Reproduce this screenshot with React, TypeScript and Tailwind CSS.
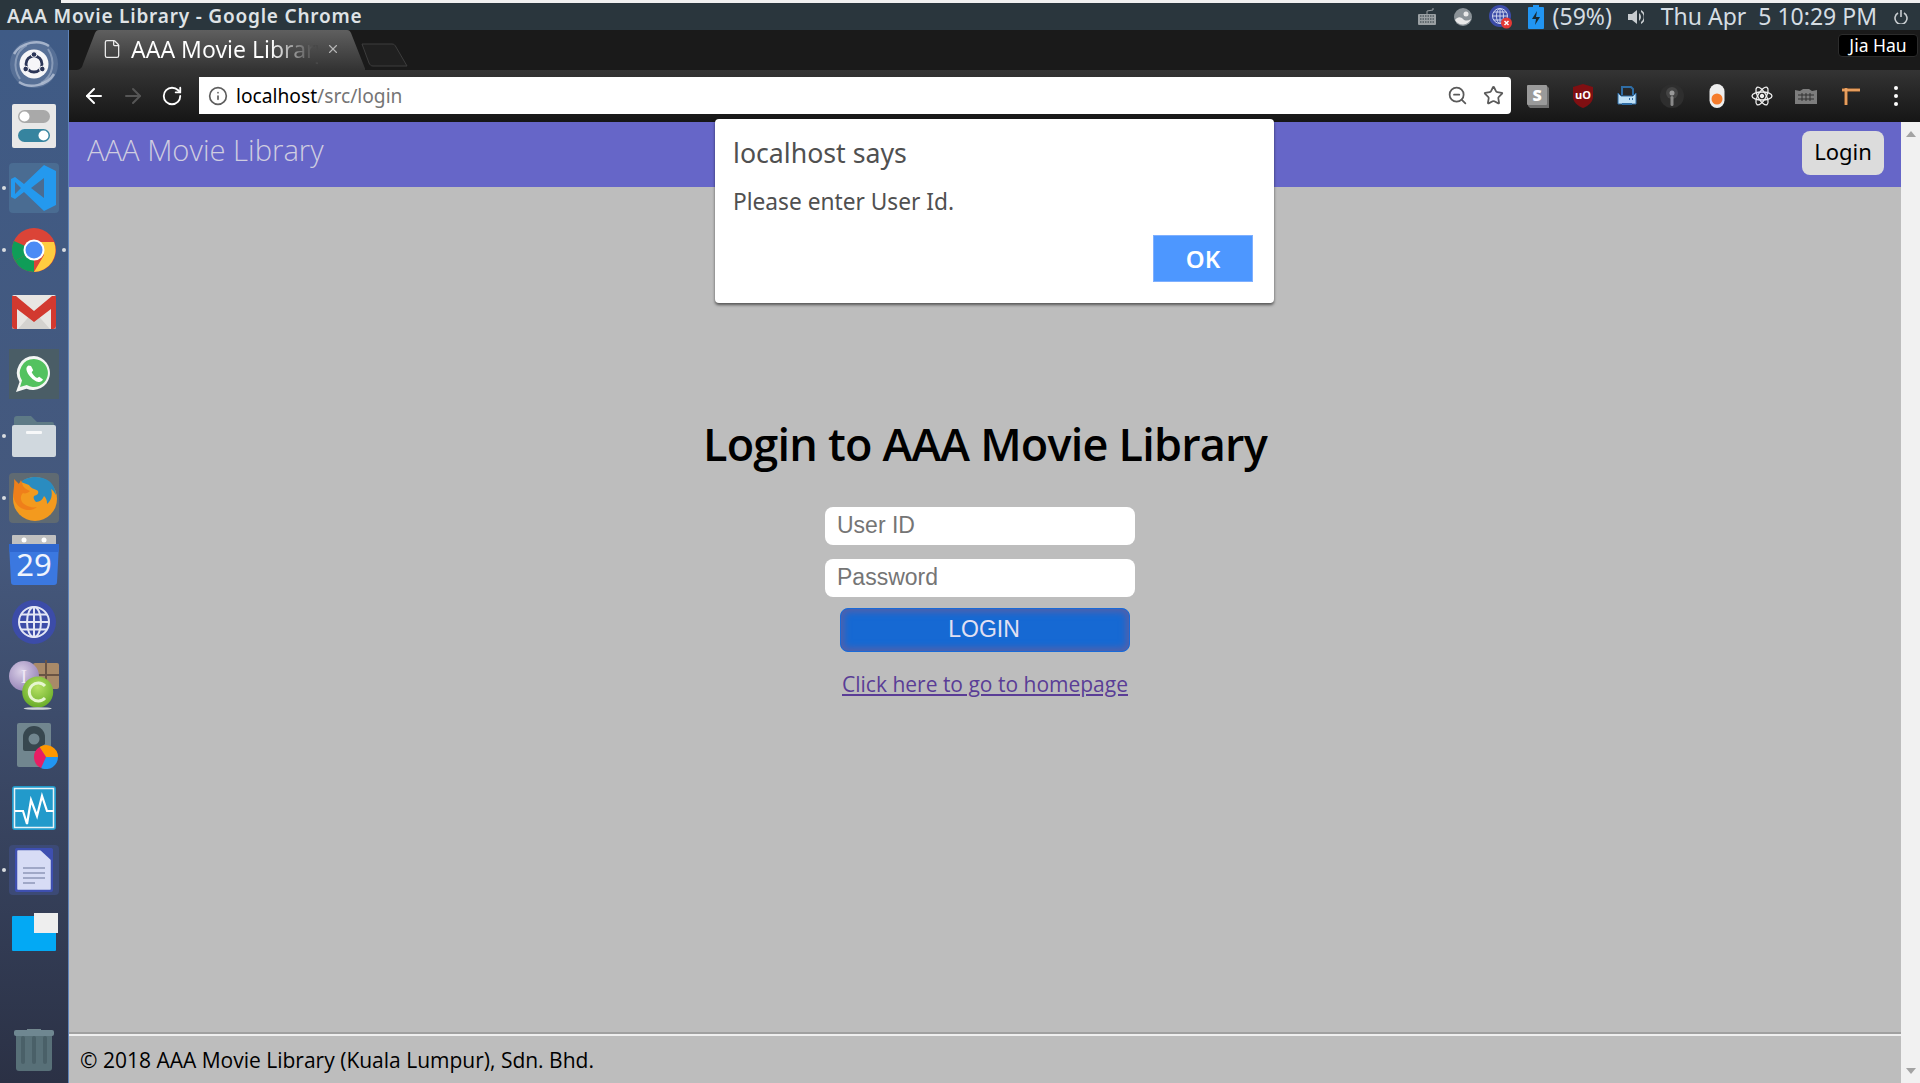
import { ArrowLeft, ArrowRight, RotateCw, Star, ZoomOut, Info, File, X } from "lucide-react";

const sans = "font-['Open_Sans',sans-serif]";
const ui = "font-['Noto_Sans',sans-serif]";

function UbuntuIcon() {
  return (
    <svg width="50" height="50" viewBox="0 0 50 50" fill="none">
      <circle cx="25" cy="25" r="24" fill="#8fa3c0" opacity="0.3" />
      <path d="M5 15C12 3 30 0 40 7M45 35C38 47 20 50 10 43" stroke="#c4cfdf" strokeWidth="2.500" opacity="0.7" />
      <path d="M11 40C3 28 6 12 18 6M39 10c8 12 5 28-7 34" stroke="#c4cfdf" strokeWidth="2" opacity="0.45" />
      <circle cx="25" cy="25" r="14.500" fill="#f6f6f8" />
      <circle cx="25" cy="25" r="8" stroke="#2c3658" strokeWidth="2.800" />
      <circle cx="25" cy="15.500" r="2.800" fill="#2c3658" stroke="#f6f6f8" />
      <circle cx="16.700" cy="30" r="2.800" fill="#2c3658" stroke="#f6f6f8" />
      <circle cx="33.300" cy="30" r="2.800" fill="#2c3658" stroke="#f6f6f8" />
    </svg>
  );
}

function SettingsIcon() {
  return (
    <svg width="44" height="44" viewBox="0 0 44 44">
      <rect width="44" height="44" rx="2" fill="#e8e8e8" />
      <rect x="6" y="6" width="32" height="13" rx="6.500" fill="#a9a9a9" />
      <circle cx="12.500" cy="12.500" r="5" fill="#fff" />
      <rect x="6" y="25" width="32" height="13" rx="6.500" fill="#36849f" />
      <circle cx="31.500" cy="31.500" r="5" fill="#fff" />
    </svg>
  );
}

function VsCodeIcon() {
  return (
    <div className="flex size-[50px] items-center justify-center rounded bg-[#4a6c92]">
      <svg width="48" height="48" viewBox="0 0 48 48">
        <path d="M34 1l12 6v34l-12 6-20-19-9 7-4-2V15l4-2 9 7z" fill="#2499ee" />
        <path d="M34 14L21 24l13 10zM5 18v12l6-6z" fill="#4a6c92" />
      </svg>
    </div>
  );
}

function ChromeIcon() {
  return (
    <svg width="44" height="44" viewBox="0 0 44 44">
      <circle cx="22" cy="22" r="22" fill="#db4437" />
      <path d="M22 22L3 33A22 22 0 0 1 2 13z" fill="#0f9d58" />
      <path d="M22 22L3 33A22 22 0 0 0 22 44z" fill="#0f9d58" />
      <path d="M22 14h20a22 22 0 0 1-20 30l10-17z" fill="#ffcd40" />
      <circle cx="22" cy="22" r="10.500" fill="#fff" />
      <circle cx="22" cy="22" r="8.500" fill="#4c8bf5" />
    </svg>
  );
}

function GmailIcon() {
  return (
    <svg width="44" height="34" viewBox="0 0 44 34">
      <rect width="44" height="34" rx="2" fill="#e8e6e3" />
      <path d="M6 34l16-18 16 18z" fill="#d4d2cf" />
      <path d="M0 3l22 17L44 3v28a3 3 0 0 1-3 3h-2V14L22 27 5 14v20H3a3 3 0 0 1-3-3z" fill="#d2392f" />
      <path d="M0 1h4l18 15L40 1h4v3L22 21 0 4z" fill="#d2392f" />
    </svg>
  );
}

function WhatsappIcon() {
  return (
    <div className="flex size-[50px] items-center justify-center bg-[#4a5d66]">
      <svg width="38" height="38" viewBox="0 0 38 38">
        <path d="M19 1a17 17 0 0 0-14.500 26L1 37l10.500-3.300A17 17 0 1 0 19 1z" fill="#f4f6f4" />
        <path d="M19 4a14 14 0 0 0-12 21.500L5 32l6.700-2A14 14 0 1 0 19 4z" fill="#53c25f" />
        <path d="M13.500 10.500c-1.500.8-2.500 2.500-2 4.500 1 4.500 6.500 11 12 12 2 .3 3.700-.8 4.500-2.500l-3.800-2.800-2 1.300c-2-.8-4.500-3.500-5.500-5.800l1.500-2-2.200-4.200z" fill="#fff" />
      </svg>
    </div>
  );
}

function FilesIcon() {
  return (
    <svg width="44" height="42" viewBox="0 0 44 42">
      <path d="M2 10V4a3 3 0 0 1 3-3h14l6 6h15a2 2 0 0 1 2 2v8H2z" fill="#5e7a86" />
      <rect y="10" width="44" height="32" rx="2" fill="#d0d8de" />
      <rect x="14" y="16" width="16" height="3" rx="1" fill="#f7f8f9" />
    </svg>
  );
}

function FirefoxIcon() {
  return (
    <div className="flex size-[50px] items-center justify-center rounded-sm bg-[#5f6a72]">
      <svg width="46" height="46" viewBox="0 0 46 46">
        <circle cx="24" cy="24" r="22" fill="#f39a1e" />
        <path d="M10 7C16 1 30 0 38 6c4 3 7 9 7 14-2-3-3-5-5-6 2 6 0 12-4 15 0-4-1-6-3-8-1 3-4 6-8 6-2-2-3-4-2-6 3-1 5-2 4-5-2-2-7-2-9-6z" fill="#2a8cc0" />
        <path d="M3 4l5 5 2-4 2 6c2 3 5 4 7 5-2 2-5 3-7 2-3 3-3 8 1 11 4 3 9 4 13 3-7 6-19 3-23-8C1 18 4 12 3 4z" fill="#ef7f1a" />
      </svg>
    </div>
  );
}

function CalendarIcon() {
  return (
    <svg width="50" height="50" viewBox="0 0 50 50">
      <rect x="3" y="0" width="44" height="12" rx="1" fill="#c0c0c0" />
      <circle cx="15" cy="5" r="2.500" fill="#fff" />
      <circle cx="35" cy="5" r="2.500" fill="#fff" />
      <path d="M0 9h50l-2 38a3 3 0 0 1-3 3H5a3 3 0 0 1-3-3z" fill="#3b78e0" />
      <path d="M0 9h50l-.5 8H.5z" fill="#2f67cf" />
      <text x="25" y="41" textAnchor="middle" fontSize="31" fill="#f0f4fd" fontFamily="Noto Sans">29</text>
    </svg>
  );
}

function GlobeIcon() {
  return (
    <svg width="44" height="44" viewBox="0 0 44 44" fill="none" stroke="#e3e6f5" strokeWidth="2">
      <circle cx="22" cy="22" r="22" fill="#3c4ca8" stroke="none" />
      <circle cx="22" cy="22" r="15" />
      <ellipse cx="22" cy="22" rx="7" ry="15" />
      <path d="M22 7v30M7 22h30M9 14.500h26M9 29.500h26" />
    </svg>
  );
}

function BundleIcon() {
  return (
    <svg width="50" height="52" viewBox="0 0 50 52">
      <defs>
        <radialGradient id="purpleBall" cx="0.4" cy="0.35" r="0.7">
          <stop offset="0" stopColor="#d9cfe6" />
          <stop offset="1" stopColor="#9481b6" />
        </radialGradient>
        <radialGradient id="greenBall" cx="0.5" cy="0.35" r="0.7">
          <stop offset="0" stopColor="#b7e264" />
          <stop offset="1" stopColor="#62a824" />
        </radialGradient>
      </defs>
      <rect x="24" y="5" width="26" height="26" rx="2" fill="#a98a68" />
      <path d="M37 2v29M24 17h26" stroke="#6a5444" strokeWidth="2" />
      <circle cx="15" cy="18" r="15" fill="url(#purpleBall)" />
      <text x="15" y="25" textAnchor="middle" fontSize="19" fill="#efe8f5" fontFamily="Liberation Serif">I</text>
      <circle cx="28.700" cy="34" r="15.500" fill="url(#greenBall)" />
      <path d="M36 28a9 9 0 1 0 0 12" fill="none" stroke="#e6f6cf" strokeWidth="3" />
      <ellipse cx="28.700" cy="50.500" rx="14" ry="1.300" fill="#cdd2d6" />
    </svg>
  );
}

function DiskIcon() {
  return (
    <svg width="42" height="46" viewBox="0 0 42 46" className="ml-[8px]">
      <rect width="34" height="44" rx="2" fill="#71868f" />
      <path d="M6 26V14a11 11 0 0 1 22 0v7l-9 7H8a2 2 0 0 1-2-2z" fill="#37474f" />
      <circle cx="17" cy="16" r="5.500" fill="#71868f" />
      <path d="M29 34L22.500 24A12 12 0 0 1 41 34z" fill="#ff9800" />
      <path d="M29 34H41A12 12 0 0 1 24 45z" fill="#2196f3" />
      <path d="M29 34L24 45A12 12 0 0 1 22.500 24z" fill="#e91e63" />
    </svg>
  );
}

function MonitorIcon() {
  return (
    <svg width="44" height="44" viewBox="0 0 44 44">
      <rect width="44" height="44" rx="3" fill="#229acb" />
      <rect x="2.500" y="2.500" width="39" height="39" fill="#229acb" stroke="#e8f3f8" strokeWidth="1.500" />
      <path d="M3 25h8l4 13 4-24 6 16 5-20 5 15h7" fill="none" stroke="#fff" strokeWidth="2.200" />
    </svg>
  );
}

function WriterIcon() {
  return (
    <div className="flex size-[50px] items-center justify-center rounded bg-[#3c4a76]">
      <svg width="38" height="44" viewBox="0 0 38 44">
        <rect x="1" y="1" width="36" height="42" rx="2" fill="#d7dcf5" stroke="#3e4fb0" strokeWidth="2.500" />
        <path d="M24 1l13 12V1z" fill="#3e4fb0" />
        <path d="M8 20h22M8 25h22M8 30h22M8 35h12" stroke="#8f96b8" strokeWidth="1.500" />
      </svg>
    </div>
  );
}

function DesktopIcon() {
  return (
    <svg width="48" height="38" viewBox="0 0 48 38" className="ml-[4px]">
      <rect y="3" width="44" height="35" rx="1" fill="#03a9f4" />
      <rect x="22" y="0" width="24" height="20" fill="#eeeeee" />
    </svg>
  );
}

function TrashIcon() {
  return (
    <svg width="42" height="46" viewBox="0 0 42 46">
      <path d="M14 3h14v2H14z" fill="#73888f" />
      <rect x="1" y="4" width="40" height="6" rx="2" fill="#6f8791" />
      <path d="M3 10h36v32a3 3 0 0 1-3 3H6a3 3 0 0 1-3-3z" fill="#587078" />
      <path d="M10 12v24M21 12v24M32 12v24" stroke="#4a6068" strokeWidth="4" strokeLinecap="round" />
    </svg>
  );
}

const launcher = [
  { node: <UbuntuIcon />, pip: false },
  { node: <SettingsIcon />, pip: false },
  { node: <VsCodeIcon />, pip: true },
  { node: <ChromeIcon />, pip: true, active: true },
  { node: <GmailIcon />, pip: false },
  { node: <WhatsappIcon />, pip: false },
  { node: <FilesIcon />, pip: true },
  { node: <FirefoxIcon />, pip: true },
  { node: <CalendarIcon />, pip: false },
  { node: <GlobeIcon />, pip: false },
  { node: <BundleIcon />, pip: false },
  { node: <DiskIcon />, pip: false },
  { node: <MonitorIcon />, pip: false },
  { node: <WriterIcon />, pip: true },
  { node: <DesktopIcon />, pip: false },
];

function Launcher() {
  return (
    <aside className="flex w-[69px] shrink-0 flex-col border-r border-[#5f83b8] bg-gradient-to-b from-[#3f5b86] via-[#45587c] via-50% to-[#2b3145] pt-[3px]">
      {launcher.map((item, i) => (
        <div key={i} className="relative flex h-[62px] items-center justify-center">
          {item.pip && <span className="absolute left-[2px] size-[4px] rounded-full bg-[#d8dce0]" />}
          {item.active && <span className="absolute right-[2px] size-[4px] rounded-full bg-[#d8dce0]" />}
          {item.node}
        </div>
      ))}
      <div className="mt-auto flex justify-center pb-[11px]">
        <TrashIcon />
      </div>
    </aside>
  );
}

function TopPanel() {
  return (
    <header className="flex h-[27px] shrink-0 items-center justify-between bg-[#2a363d] pl-[7px] text-[#dfe3e6]">
      <span className={`${ui} text-[19px] font-semibold tracking-[0.8px]`}>AAA Movie Library - Google Chrome</span>
      <div className={`${ui} flex items-center text-[23px]`}>
        <svg width="20" height="18" viewBox="0 0 20 18" className="mr-[17px]" fill="#9aa0a3">
          <path d="M2 6h16a1 1 0 0 1 1 1v9a1 1 0 0 1-1 1H2a1 1 0 0 1-1-1V7a1 1 0 0 1 1-1z" />
          <path d="M3 8h14M3 11h14M3 14h14" stroke="#2a363d" strokeDasharray="1.500 1" />
          <path d="M10 6V3l6-1V0" fill="none" stroke="#9aa0a3" />
        </svg>
        <svg width="18" height="18" viewBox="0 0 18 18" className="mr-[17px]">
          <circle cx="9" cy="9" r="9" fill="#8a9297" />
          <path d="M1 12c3-4 6-3 8-1s5 2 8 0a9 9 0 0 1-16 1z" fill="#e8e8e8" />
          <circle cx="12" cy="6" r="2.500" fill="#e8e8e8" />
        </svg>
        <svg width="24" height="24" viewBox="0 0 24 24" className="mr-[15px]" fill="none" stroke="#cdd3ee" strokeWidth="1">
          <circle cx="11" cy="11" r="11" fill="#3c4ca8" stroke="none" />
          <circle cx="11" cy="11" r="7.500" />
          <ellipse cx="11" cy="11" rx="3.500" ry="7.500" />
          <path d="M3.500 11h15M11 3.500v15M5 7h12M5 15h12" />
          <circle cx="17.500" cy="18" r="5.500" fill="#e53935" stroke="none" />
          <path d="M15.500 16l4 4m0-4l-4 4" stroke="#fff" strokeWidth="1.500" />
        </svg>
        <svg width="16" height="24" viewBox="0 0 16 24" className="mr-[9px]">
          <rect x="5" y="0" width="6" height="3" fill="#2196f3" />
          <rect y="2" width="16" height="22" rx="1" fill="#2196f3" />
          <path d="M9 6l-5 8h4l-1 6 5-8H8z" fill="#1a2a33" />
        </svg>
        <span className="mr-[16px] text-[#d5dde3]">(59%)</span>
        <svg width="16" height="16" viewBox="0 0 16 16" className="mr-[17px]" fill="#c8cdd0">
          <path d="M0 5h4l5-4v14l-5-4H0z" />
          <path d="M11 4a5 5 0 0 1 0 8zM13 1a8 8 0 0 1 0 14v-2a6 6 0 0 0 0-10z" />
        </svg>
        <span className="mr-[17px] whitespace-pre text-[#d5dde3]">Thu Apr  5 10:29 PM</span>
        <svg width="14" height="14" viewBox="0 0 14 14" className="mr-[12px]" fill="none" stroke="#c8cdd0" strokeWidth="1.600">
          <path d="M4 3a6 6 0 1 0 6 0M7 0v7" />
        </svg>
      </div>
    </header>
  );
}

function TabStrip() {
  return (
    <div className="relative flex h-[40px] shrink-0 items-end bg-[#1a1a1a]">
      <div className="relative ml-[6px] flex h-[40px] w-[290px] items-center pb-[2px]">
        <svg className="absolute inset-0" width="290" height="40" viewBox="0 0 290 40">
          <defs>
            <linearGradient id="tab" x1="0" x2="0" y1="0" y2="1">
              <stop offset="0" stopColor="#5f5f5f" />
              <stop offset="1" stopColor="#333333" />
            </linearGradient>
          </defs>
          <path d="M0 40c5 0 7-2 8-6L20 3c1-2 2-3 4-3h248c2 0 3 1 4 3l13 33c1 3 2 4 5 4z" fill="url(#tab)" />
        </svg>
        <File className="relative ml-[27px] text-[#eeeeee]" size={20} strokeWidth={1.5} />
        <span className={`${ui} relative ml-[9px] w-[187px] overflow-hidden whitespace-nowrap bg-gradient-to-r from-white from-75% to-[#484848] to-98% bg-clip-text text-[23px] text-transparent`}>
          AAA Movie Library
        </span>
        <X className="relative ml-[8px] text-[#b5b5b5]" size={14} strokeWidth={2} />
      </div>
      <svg width="50" height="25" viewBox="0 0 50 25" className="mb-[3px] ml-[-4px]">
        <path d="M1 2h30c2 0 3 1 4 3l11 19H12c-2 0-3-1-4-3z" fill="#202020" stroke="#3d3d3d" />
      </svg>
      <div className="absolute right-[2px] top-[4px] flex h-[23px] w-[80px] items-center justify-center rounded-sm border border-[#2c2c2c] bg-black">
        <span className={`${ui} text-[17.5px] text-white`}>Jia Hau</span>
      </div>
    </div>
  );
}

function ExtSlot({ children }: { children: React.ReactNode }) {
  return <div className="flex w-[44.75px] shrink-0 items-center justify-center">{children}</div>;
}

function Toolbar() {
  return (
    <div className="flex h-[52px] shrink-0 items-start bg-gradient-to-b from-[#343434] to-[#161616] pt-[7px]">
      <div className="flex h-[37px] w-[130px] shrink-0 items-center text-white">
        <ArrowLeft className="ml-[13px]" size={24} strokeWidth={2} />
        <ArrowRight className="ml-[15px] text-[#565656]" size={24} strokeWidth={2} />
        <RotateCw className="ml-[16px]" size={22} strokeWidth={2} />
      </div>
      <div className="flex h-[37px] w-[1312px] shrink-0 items-center rounded-r-sm bg-white">
        <Info className="ml-[9px] text-[#5e5e5e]" size={20} strokeWidth={2} />
        <span className={`${ui} ml-[8px] pt-[1px] text-[19.2px] text-[#757575]`}>
          <span className="text-black">localhost</span>/src/login
        </span>
        <ZoomOut className="ml-auto text-[#5a5a5a]" size={21} strokeWidth={2} />
        <Star className="ml-[15px] mr-[7px] text-[#5a5a5a]" size={21} strokeWidth={2} />
      </div>
      <div className="flex h-[37px] flex-1 items-center pl-[4.6px]">
        <ExtSlot>
          <svg width="24" height="24" viewBox="0 0 24 24">
            <path d="M2 2h19l2 2v20H4l-2-2z" fill="#6f6f6f" />
            <rect x="1" y="1" width="20" height="20" rx="1" fill="#9a9a9a" />
            <text x="11" y="17" textAnchor="middle" fontSize="16" fontWeight="800" fill="#fff" fontFamily="Open Sans">S</text>
          </svg>
        </ExtSlot>
        <ExtSlot>
          <svg width="22" height="24" viewBox="0 0 22 24">
            <path d="M11 0l10 3v10c0 5-5 9-10 11C6 22 1 18 1 13V3z" fill="#800f12" />
            <text x="11" y="15" textAnchor="middle" fontSize="11" fontWeight="700" fill="#fff" fontFamily="Open Sans">uO</text>
          </svg>
        </ExtSlot>
        <ExtSlot>
          <svg width="20" height="20" viewBox="0 0 20 20">
            <path d="M5 9V1h9l2 2v6" fill="none" stroke="#2f6da5" strokeWidth="2" />
            <path d="M1 7v11h18V7l-3 3H4z" fill="#bfe0f6" stroke="#2f6da5" />
            <path d="M5 18h10" stroke="#2f6da5" strokeWidth="2" />
            <path d="M12 13h1m2 0h1" stroke="#2f6da5" strokeWidth="2" />
          </svg>
        </ExtSlot>
        <ExtSlot>
          <svg width="24" height="24" viewBox="0 0 24 24">
            <circle cx="12" cy="12" r="12" fill="#2e2e2e" />
            <circle cx="12" cy="9" r="6" fill="#444444" />
            <circle cx="12" cy="9" r="2.500" fill="#999999" />
            <rect x="10.500" y="12" width="3" height="10" rx="1.500" fill="#8a8a8a" />
          </svg>
        </ExtSlot>
        <ExtSlot>
          <svg width="16" height="24" viewBox="0 0 16 24">
            <rect width="15" height="24" rx="7.500" x="0.500" fill="#eeeeee" />
            <circle cx="8" cy="15" r="5.500" fill="#f57c2c" />
          </svg>
        </ExtSlot>
        <ExtSlot>
          <svg width="22" height="22" viewBox="-11 -11 22 22" fill="none" stroke="#f0f0f0" strokeWidth="1.300">
            <ellipse rx="10" ry="4" />
            <ellipse rx="10" ry="4" transform="rotate(60)" />
            <ellipse rx="10" ry="4" transform="rotate(120)" />
            <circle r="1.500" fill="#f0f0f0" />
          </svg>
        </ExtSlot>
        <ExtSlot>
          <svg width="22" height="16" viewBox="0 0 22 16">
            <path d="M0 2l5 1 3-2 6 0 3 2 5-1v14H0z" fill="#7d7d7d" />
            <path d="M3 7h16M3 11h16M7 5v8M11 5v8M15 5v8" stroke="#333333" />
          </svg>
        </ExtSlot>
        <ExtSlot>
          <svg width="20" height="20" viewBox="0 0 20 20" fill="none" stroke="#dd8a42" strokeWidth="3">
            <path d="M1 4h18M5 2v17" />
            <path d="M1 4h18M5 2v17" stroke="#f0b078" strokeWidth="1" />
          </svg>
        </ExtSlot>
        <ExtSlot>
          <div className="flex flex-col gap-[4px]">
            <span className="size-[4px] rounded-full bg-white" />
            <span className="size-[4px] rounded-full bg-white" />
            <span className="size-[4px] rounded-full bg-white" />
          </div>
        </ExtSlot>
      </div>
    </div>
  );
}

function AlertDialog() {
  return (
    <div className={`${ui} absolute left-[715px] top-[119px] h-[184px] w-[559px] rounded-sm bg-white px-[18px] pt-[16px] text-[#505050] shadow-[0_2px_3px_rgba(0,0,0,0.55)]`}>
      <p className="text-[26.7px] leading-[36px]">localhost says</p>
      <p className="mt-[16px] text-[22.7px] leading-[30px]">Please enter User Id.</p>
      <button className="absolute bottom-[21px] right-[21px] h-[47px] w-[100px] border border-[#7fb0ff] bg-[#4d97ff] text-[24px] font-semibold text-white">
        OK
      </button>
    </div>
  );
}

function LoginPage() {
  return (
    <div className="flex min-w-0 flex-1 flex-col bg-[#bdbdbd]">
      <div className="flex h-[65px] shrink-0 items-start justify-between bg-[#6666c8] pl-[18px] pr-[17px] pt-[8px]">
        <span className={`${sans} text-[29.2px] font-light leading-[40px] text-[#cfcde0]`}>AAA Movie Library</span>
        <button className={`${ui} mt-px h-[44px] w-[82px] rounded-[8px] bg-[#dcdcdc] pb-[4px] text-[22px] text-black`}>Login</button>
      </div>
      <main className="flex flex-1 flex-col items-center pt-[232px]">
        <h1 className={`${sans} text-[45px] font-semibold leading-[50px] tracking-[-0.8px] text-black`}>Login to AAA Movie Library</h1>
        <div className="mr-[10px] mt-[38px] flex w-[310px] flex-col gap-[14px] self-center">
          <input placeholder="User ID" className="h-[38px] rounded-[8px] bg-white px-[12px] pb-[2px] font-['Liberation_Sans',sans-serif] text-[23px] placeholder:text-[#757575]" />
          <input placeholder="Password" className="h-[38px] rounded-[8px] bg-white px-[12px] pb-[2px] font-['Liberation_Sans',sans-serif] text-[23px] placeholder:text-[#757575]" />
        </div>
        <button className="mt-[11px] h-[44px] w-[290px] rounded-[8px] border border-[#1a6ad8] bg-[#1669d3] pb-[2px] pr-[2px] font-['Liberation_Sans',sans-serif] text-[23px] text-[#e1e0f2] shadow-[inset_0_0_7px_3px_#5560a8]">
          LOGIN
        </button>
        <a href="#" className={`${sans} mt-[17px] text-[21px] text-[#5a3d96] underline`}>
          Click here to go to homepage
        </a>
      </main>
      <div className="h-[2px] bg-[#a0a0a0]" />
      <div className="h-[2px] bg-[#efefef]" />
      <footer className={`${sans} flex h-[47px] items-center pl-[11px] pt-[2px] text-[21px] text-black`}>
        © 2018 AAA Movie Library (Kuala Lumpur), Sdn. Bhd.
      </footer>
    </div>
  );
}

export default function App() {
  return (
    <div className="relative flex h-[1083px] w-[1920px] flex-col overflow-hidden bg-[#1a1a1a]">
      <div className="flex h-[3px] shrink-0 bg-[#f0f0f0]">
        <div className="w-[61px] bg-[#2a363d]" />
      </div>
      <TopPanel />
      <div className="flex min-h-0 flex-1">
        <Launcher />
        <div className="flex min-w-0 flex-1 flex-col">
          <TabStrip />
          <Toolbar />
          <div className="flex min-h-0 flex-1">
            <LoginPage />
            <div className="flex w-[19px] shrink-0 flex-col items-center justify-between bg-[#f1f1f1] py-[9px]">
              <span className="h-0 w-0 border-x-[5px] border-b-[6px] border-x-transparent border-b-[#a3a3a3]" />
              <span className="h-0 w-0 border-x-[5px] border-t-[6px] border-x-transparent border-t-[#a3a3a3]" />
            </div>
          </div>
        </div>
      </div>
      <AlertDialog />
    </div>
  );
}
